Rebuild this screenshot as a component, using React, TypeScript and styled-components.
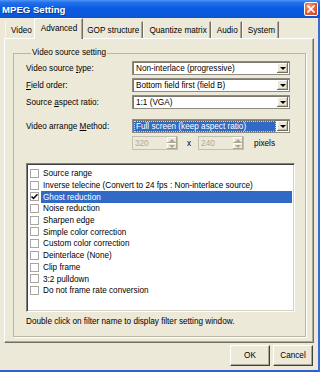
import React from 'react';
import styled, { createGlobalStyle } from 'styled-components';

const GlobalStyle = createGlobalStyle`
  html, body { margin: 0; padding: 0; background: #ece9d8; }
  body {
    font-family: "Liberation Sans", Arial, sans-serif;
    font-size: 8.2px;
    color: #000;
  }
  #root { width: 320px; height: 372px; overflow: hidden; }
`;

const Window = styled.div`
  width: 320px;
  height: 372px;
  display: flex;
  flex-direction: column;
  background: #ece9d8;
  overflow: hidden;
`;

const TitleBar = styled.div`
  height: 18px;
  flex: none;
  display: flex;
  align-items: center;
  justify-content: space-between;
  padding: 0 2px 0 2px;
  background: linear-gradient(to bottom, #4d95f6 0%, #2571ec 14%, #0b5ce4 45%, #0a58dd 80%, #0b55cf 100%);
`;

const Title = styled.span`
  color: #fff;
  font-weight: bold;
  font-size: 9.6px;
  text-shadow: 1px 1px 0 #0b3a9c;
`;

const CloseButton = styled.div`
  width: 14px;
  height: 14px;
  box-sizing: border-box;
  border: 1px solid #fff;
  border-radius: 2px;
  background: radial-gradient(circle at 35% 30%, #f6a486 0%, #e5653f 45%, #c9421d 100%);
  display: flex;
  align-items: center;
  justify-content: center;
`;

const Frame = styled.div`
  flex: 1;
  display: flex;
  flex-direction: column;
  border-right: 2px solid #3a6ad6;
  border-bottom: 2px solid #2f5fcc;
`;

const TabStrip = styled.div`
  height: 20px;
  flex: none;
  display: flex;
  align-items: flex-end;
  padding-left: 5px;
`;

const Tab = styled.div<{ $active?: boolean }>`
  position: relative;
  box-sizing: border-box;
  height: ${p => (p.$active ? '21px' : '17px')};
  margin: ${p => (p.$active ? '0 -2px -1px -2px' : '0')};
  padding: ${p => (p.$active ? '0 5px 2px 6px' : '0 3px 0 5px')};
  display: flex;
  align-items: center;
  background: #ece9d8;
  border-top: 1px solid ${p => (p.$active ? '#fff' : '#ece9d8')};
  border-left: 1px solid ${p => (p.$active ? '#fff' : '#f7f6f0')};
  border-right: 1px solid #716f64;
  box-shadow: inset -1px 0 0 #aca899;
  z-index: ${p => (p.$active ? 2 : 1)};
  white-space: nowrap;
`;

const TabPage = styled.div`
  height: 305px;
  flex: none;
  margin: 0 4px 0 4px;
  box-sizing: border-box;
  border-top: 1px solid #fff;
  border-left: 1px solid #fff;
  border-right: 1px solid #716f64;
  border-bottom: 1px solid #716f64;
  box-shadow: inset -1px -1px 0 #aca899;
  padding: 9px 7px 0 8px;
`;

const Group = styled.fieldset`
  margin: 0;
  height: 289px;
  box-sizing: border-box;
  border: 1px solid #b9b6a6;
  box-shadow: 1px 1px 0 #fff;
  padding: 3px 11px 0 12px;
  display: flex;
  flex-direction: column;
`;

const Legend = styled.legend`
  margin-left: 5px;
  padding: 0 1px;
  line-height: 10px;
`;

const FieldRow = styled.div<{ $gap?: number }>`
  display: grid;
  grid-template-columns: 106px 158px;
  align-items: center;
  margin-top: ${p => p.$gap ?? 3}px;
`;

const Label = styled.span`
  white-space: nowrap;
`;

const Select = styled.div`
  height: 14px;
  box-sizing: border-box;
  border: 1px solid #8d8b80;
  box-shadow: inset 1px 1px 0 #7a786e;
  background: #fff;
  display: flex;
  align-items: stretch;
  padding: 1px 1px 0 1px;
`;

const SelectText = styled.span<{ $focus?: boolean }>`
  flex: 1;
  display: flex;
  align-items: center;
  padding-left: 2px;
  margin-right: 1px;
  white-space: nowrap;
  overflow: hidden;
  background: ${p => (p.$focus ? '#316ac5' : 'transparent')};
  color: ${p => (p.$focus ? '#fff' : '#000')};
  outline: ${p => (p.$focus ? '1px dotted #c9d6ee' : 'none')};
  outline-offset: -1px;
`;

const ArrowButton = styled.span`
  width: 11px;
  flex: none;
  background: #ece9d8;
  box-shadow: inset -1px -1px 0 #716f64, inset 1px 1px 0 #fff, inset -2px -2px 0 #c4c1b2;
  display: flex;
  align-items: center;
  justify-content: center;
  margin-bottom: 1px;
`;

const Triangle = styled.span<{ $up?: boolean; $gray?: boolean }>`
  width: 0;
  height: 0;
  border-left: 3px solid transparent;
  border-right: 3px solid transparent;
  ${p =>
    p.$up
      ? `border-bottom: 3px solid ${p.$gray ? '#aca899' : '#000'};`
      : `border-top: 3px solid ${p.$gray ? '#aca899' : '#000'};`}
`;

const SizeRow = styled.div`
  display: flex;
  align-items: center;
  margin: 3px 0 0 106px;
  height: 14px;
`;

const SpinBox = styled.div`
  width: 46px;
  height: 14px;
  box-sizing: border-box;
  border: 1px solid #c2c0b4;
  background: #ece9d8;
  display: flex;
  color: #aca899;
`;

const SpinValue = styled.span`
  flex: 1;
  display: flex;
  align-items: center;
  padding-left: 2px;
`;

const SpinButtons = styled.span`
  width: 10px;
  display: flex;
  flex-direction: column;
`;

const SpinPart = styled.span`
  flex: 1;
  display: flex;
  align-items: center;
  justify-content: center;
  box-shadow: inset -1px -1px 0 #aca899, inset 1px 1px 0 #fff;
`;

const Times = styled.span`
  margin: 0 7px 0 9px;
`;

const Pixels = styled.span`
  margin-left: 10px;
`;

const List = styled.div`
  margin-top: 13px;
  height: 149px;
  box-sizing: border-box;
  border-top: 1px solid #808080;
  border-left: 1px solid #808080;
  border-right: 1px solid #fff;
  border-bottom: 1px solid #fff;
  box-shadow: inset 1px 1px 0 #404040, inset -1px -1px 0 #d4d0c8;
  background: #fff;
  padding: 4px 2px 0 2px;
  margin-right: -1px;
`;

const Item = styled.div`
  height: 11.7px;
  display: flex;
  align-items: stretch;
`;

const Check = styled.span`
  width: 9px;
  height: 9px;
  box-sizing: border-box;
  margin: 1px 2px 0 1px;
  border: 1px solid #a8a8a0;
  background: #fff;
  display: flex;
  align-items: center;
  justify-content: center;
`;

const ItemText = styled.span<{ $selected?: boolean }>`
  flex: 1;
  padding-left: 2px;
  display: flex;
  align-items: center;
  white-space: nowrap;
  background: ${p => (p.$selected ? '#316ac5' : 'transparent')};
  color: ${p => (p.$selected ? '#fff' : '#000')};
`;

const Hint = styled.div`
  margin-top: 5px;
  white-space: nowrap;
`;

const ButtonRow = styled.div`
  display: flex;
  justify-content: flex-end;
  gap: 3px;
  margin: 2px 5px 0 0;
`;

const Button = styled.div`
  width: 40px;
  height: 21px;
  box-sizing: border-box;
  display: flex;
  align-items: center;
  justify-content: center;
  background: #ece9d8;
  border-top: 1px solid #fff;
  border-left: 1px solid #fff;
  border-right: 1px solid #404040;
  border-bottom: 1px solid #404040;
  box-shadow: inset -1px -1px 0 #aca899;
`;

const tabs = ['Video', 'Advanced', 'GOP structure', 'Quantize matrix', 'Audio', 'System'];

const filters = [
  { name: 'Source range' },
  { name: 'Inverse telecine (Convert to 24 fps : Non-interlace source)' },
  { name: 'Ghost reduction', checked: true, selected: true },
  { name: 'Noise reduction' },
  { name: 'Sharpen edge' },
  { name: 'Simple color correction' },
  { name: 'Custom color correction' },
  { name: 'Deinterlace (None)' },
  { name: 'Clip frame' },
  { name: '3:2 pulldown' },
  { name: 'Do not frame rate conversion' },
];

function DropDown({ value, focus }: { value: string; focus?: boolean }) {
  return (
    <Select>
      <SelectText $focus={focus}>{value}</SelectText>
      <ArrowButton>
        <Triangle />
      </ArrowButton>
    </Select>
  );
}

function Spin({ value }: { value: string }) {
  return (
    <SpinBox>
      <SpinValue>{value}</SpinValue>
      <SpinButtons>
        <SpinPart><Triangle $up $gray /></SpinPart>
        <SpinPart><Triangle $gray /></SpinPart>
      </SpinButtons>
    </SpinBox>
  );
}

export default function App() {
  return (
    <Window>
      <GlobalStyle />
      <TitleBar>
        <Title>MPEG Setting</Title>
        <CloseButton>
          <svg width="8" height="8" viewBox="0 0 8 8">
            <path d="M1 1 L7 7 M7 1 L1 7" stroke="#fff" strokeWidth="1.6" strokeLinecap="square" />
          </svg>
        </CloseButton>
      </TitleBar>
      <Frame>
        <TabStrip>
          {tabs.map(t => (
            <Tab key={t} $active={t === 'Advanced'}>{t}</Tab>
          ))}
        </TabStrip>
        <TabPage>
          <Group>
            <Legend>Video source setting</Legend>
            <FieldRow $gap={0}>
              <Label>Video source <u>t</u>ype:</Label>
              <DropDown value="Non-interlace (progressive)" />
            </FieldRow>
            <FieldRow>
              <Label><u>F</u>ield order:</Label>
              <DropDown value="Bottom field first (field B)" />
            </FieldRow>
            <FieldRow>
              <Label>Source <u>a</u>spect ratio:</Label>
              <DropDown value="1:1 (VGA)" />
            </FieldRow>
            <FieldRow $gap={10}>
              <Label>Video arrange <u>M</u>ethod:</Label>
              <DropDown value="Full screen (keep aspect ratio)" focus />
            </FieldRow>
            <SizeRow>
              <Spin value="320" />
              <Times>x</Times>
              <Spin value="240" />
              <Pixels>pixels</Pixels>
            </SizeRow>
            <List>
              {filters.map(f => (
                <Item key={f.name}>
                  <Check>
                    {f.checked && (
                      <svg width="7" height="7" viewBox="0 0 7 7">
                        <path d="M0.5 3.5 L2.5 5.5 L6.5 1.2" stroke="#000" strokeWidth="1.5" fill="none" />
                      </svg>
                    )}
                  </Check>
                  <ItemText $selected={f.selected}>{f.name}</ItemText>
                </Item>
              ))}
            </List>
            <Hint>Double click on filter name to display filter setting window.</Hint>
          </Group>
        </TabPage>
        <ButtonRow>
          <Button>OK</Button>
          <Button>Cancel</Button>
        </ButtonRow>
      </Frame>
    </Window>
  );
}
